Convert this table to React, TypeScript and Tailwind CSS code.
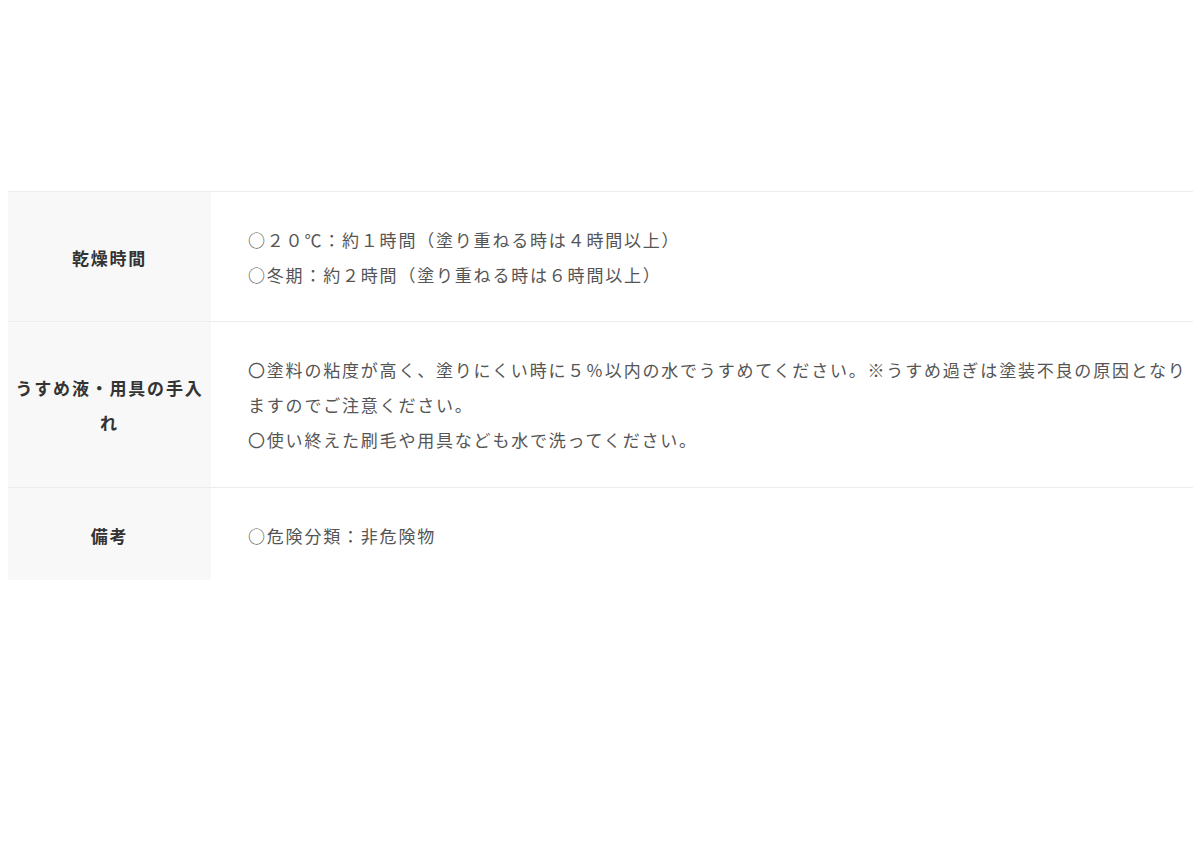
import React from 'react';

interface SpecRow {
  label: string;
  lines: string[];
  pad: string;
}

const rows: SpecRow[] = [
  {
    label: '乾燥時間',
    lines: ['○２０℃：約１時間（塗り重ねる時は４時間以上）', '○冬期：約２時間（塗り重ねる時は６時間以上）'],
    pad: 'pt-[30px] pb-[29px]',
  },
  {
    label: 'うすめ液・用具の手入れ',
    lines: [
      '〇塗料の粘度が高く、塗りにくい時に５％以内の水でうすめてください。※うすめ過ぎは塗装不良の原因となりますのでご注意ください。',
      '〇使い終えた刷毛や用具なども水で洗ってください。',
    ],
    pad: 'py-[30px]',
  },
  {
    label: '備考',
    lines: ['○危険分類：非危険物'],
    pad: 'pt-[30px] pb-[27px]',
  },
];

const App: React.FC = () => {
  return (
    <div
      className="min-h-[848px] bg-white pt-[191px] pl-[8px] pr-[7px]"
      style={{ fontFamily: '"Noto Sans CJK JP", "Noto Sans", sans-serif' }}
    >
      <table className="w-full border-collapse text-[17px] leading-[35px] tracking-[1.8px]">
        <tbody>
          {rows.map((row, i) => (
            <tr key={row.label} className={i < rows.length - 1 ? 'border-t border-b border-[#ececec]' : 'border-t border-[#ececec]'}>
              <th className={`w-[203px] bg-[#f8f8f8] px-[6px] ${row.pad} text-center align-middle font-bold text-[#333]`}>
                {row.label}
              </th>
              <td className={`${row.pad} pl-[37px] pr-[3px] align-middle text-[#555]`}>
                {row.lines.map(line => (
                  <p key={line}>{line}</p>
                ))}
              </td>
            </tr>
          ))}
        </tbody>
      </table>
    </div>
  );
};

export default App;
